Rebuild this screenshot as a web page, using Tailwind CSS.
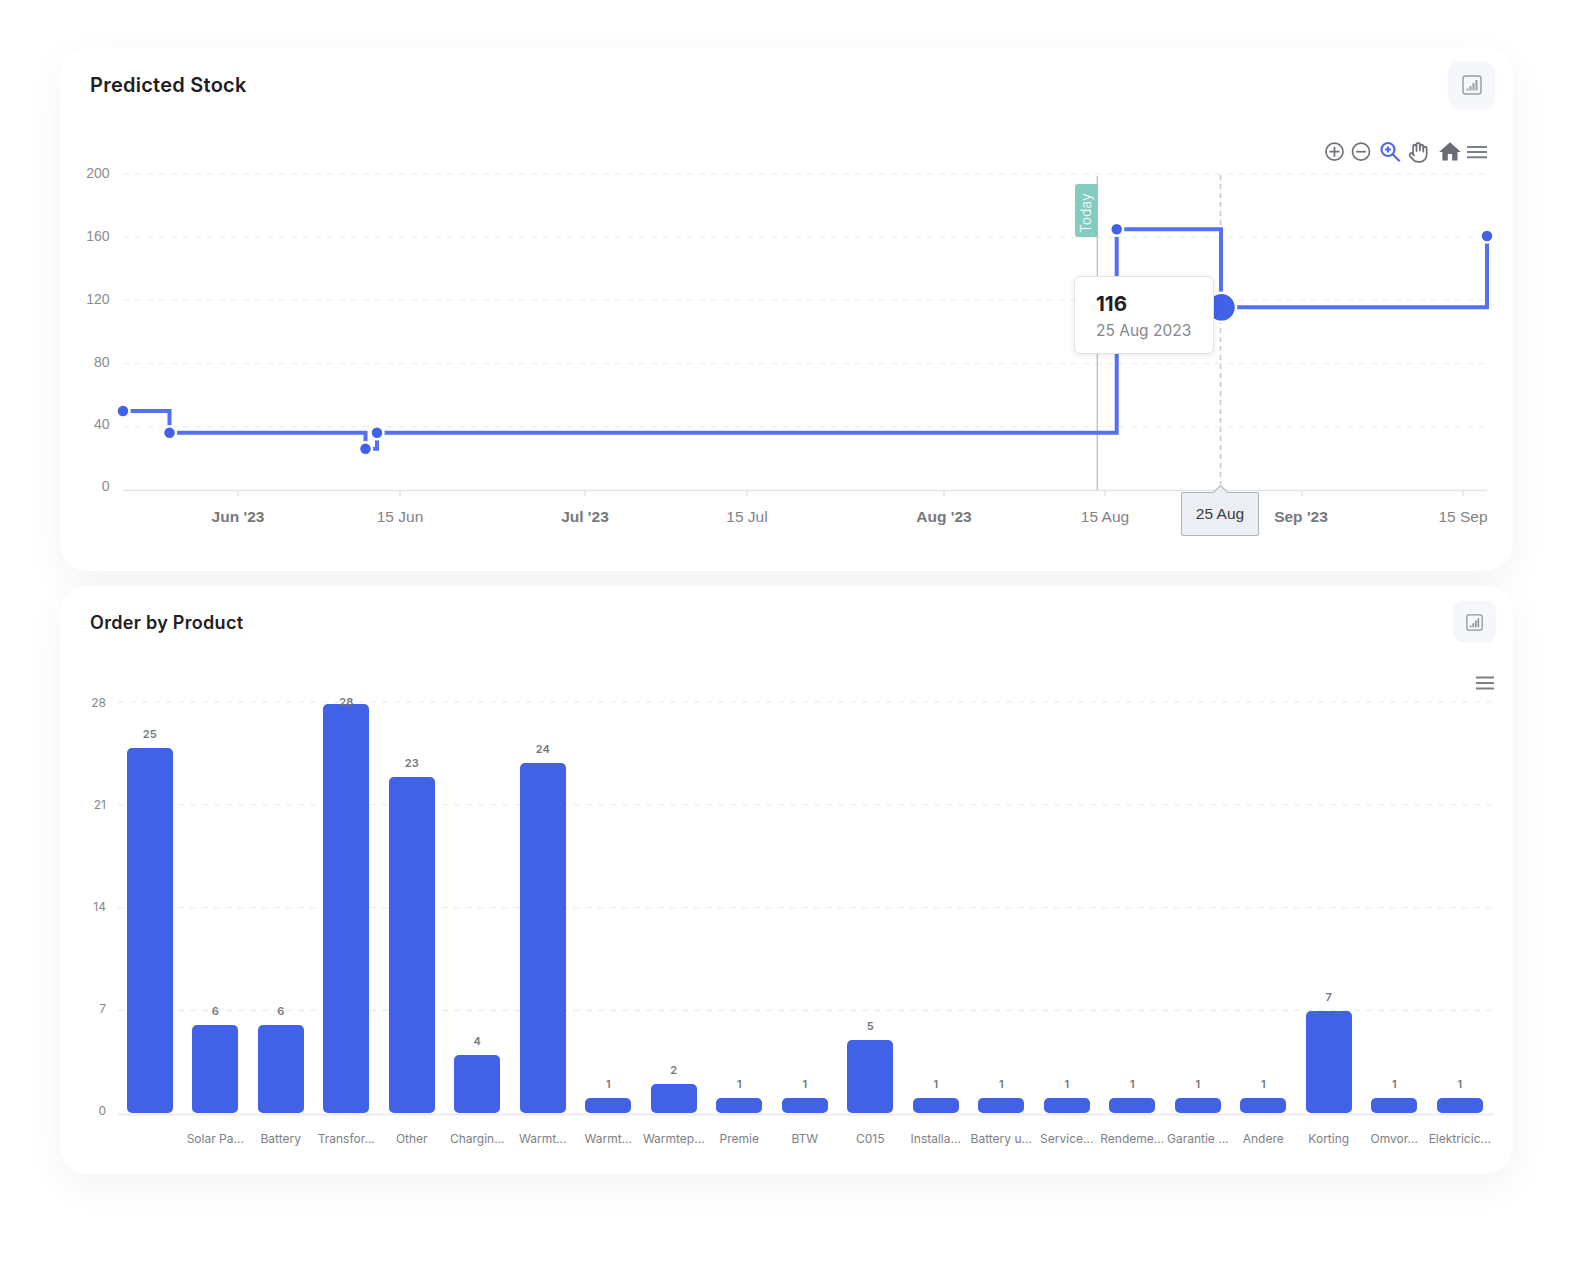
<!doctype html>
<html lang="en">
  <head>
    <meta charset="UTF-8" />
    <title>Stock dashboard</title>
    <script src="https://cdn.jsdelivr.net/npm/@tailwindcss/browser@4"></script>
  </head>
  <body class="bg-white font-['Inter',sans-serif] text-[#1f2023]">
    <div class="w-[1574px] h-[1265px] pt-[48px] pl-[60px] flex flex-col gap-[15px]">

      <!-- predicted stock -->
      <section class="w-[1453px] h-[523px] rounded-[28px] bg-white shadow-[0_12px_40px_rgba(0,0,0,0.05)]">
        <div class="flex items-center justify-between pl-[30px] pr-[18px] pt-[13px]">
          <h2 class="text-[20px] font-semibold tracking-[0.25px]">Predicted Stock</h2>
          <button class="w-[47px] h-[48px] rounded-[12px] bg-[#f6f7fa] flex items-center justify-center">
            <svg viewBox="0 0 20 20" class="w-[20px] h-[20px] fill-none stroke-[#9a9fa6] stroke-[1.5]">
              <rect x="1" y="1" width="18" height="18" rx="2.5" />
              <path d="M5.500 15.500v-2M8.500 15.500v-4.500M11.500 15.500V8M14.500 15.500V5" stroke-width="2" />
            </svg>
          </button>
        </div>
        <div class="relative w-[1453px] h-[462px]">
          <svg viewBox="60 109 1453 462" class="block w-[1453px] h-[462px] font-['Liberation_Sans',sans-serif]">
            <g class="stroke-[#eeeff3]" stroke-width="1.300" stroke-dasharray="6 6">
              <path d="M123 174.200H1487M123 237.300H1487M123 300.400H1487M123 363.500H1487M123 426.600H1487" />
            </g>
            <g class="fill-[#8a8c92] text-[14px]" text-anchor="end">
              <text x="109.500" y="178">200</text>
              <text x="109.500" y="241">160</text>
              <text x="109.500" y="304">120</text>
              <text x="109.500" y="367">80</text>
              <text x="109.500" y="429">40</text>
              <text x="109.500" y="491">0</text>
            </g>
            <path d="M123 490.600H1487M238 490.600v6M400 490.600v6M585 490.600v6M747 490.600v6M944 490.600v6M1105 490.600v6M1302 490.600v6M1463 490.600v6" class="stroke-[#e0e5ea]" stroke-width="1.500" fill="none" />
            <g class="text-[15.500px]" text-anchor="middle">
              <g class="fill-[#75787d] font-bold">
                <text x="238" y="522">Jun '23</text>
                <text x="585" y="522">Jul '23</text>
                <text x="944" y="522">Aug '23</text>
                <text x="1301" y="522">Sep '23</text>
              </g>
              <g class="fill-[#7f8288]">
                <text x="400" y="522">15 Jun</text>
                <text x="747" y="522">15 Jul</text>
                <text x="1105" y="522">15 Aug</text>
                <text x="1463" y="522">15 Sep</text>
              </g>
            </g>

            <!-- today annotation -->
            <path d="M1097.300 176V490" class="stroke-[#a3c9c5]" stroke-width="1.300" />
            <path d="M1097.300 184H1078a3 3 0 0 0-3 3v47a3 3 0 0 0 3 3h19.300z" class="fill-[#84ccc0]" />
            <text transform="translate(1091 236) rotate(-90)" x="3" class="fill-white text-[14px] font-light font-['Inter',sans-serif]">Today</text>

            <!-- crosshair -->
            <path d="M1220.500 175V484" class="stroke-[#c6c9ce]" stroke-width="1.600" stroke-dasharray="5 4" />

            <path d="M123 411H169.500V432.700H365.500V448.700H377V432.700H1116.700V229.300H1221V307.300H1487V236" fill="none" class="stroke-[#5571ef]" stroke-width="4" />
            <g class="fill-[#4162e6] stroke-white" stroke-width="2.500">
              <circle cx="123" cy="411" r="6.500" />
              <circle cx="169.500" cy="432.700" r="6.500" />
              <circle cx="365.500" cy="448.700" r="6.500" />
              <circle cx="377" cy="432.700" r="6.500" />
              <circle cx="1116.700" cy="229.300" r="6.500" />
              <circle cx="1487" cy="236" r="6.500" />
              <circle cx="1221.500" cy="307.300" r="14.500" />
            </g>

            <!-- toolbar -->
            <g fill="none" class="stroke-[#6e7278]" stroke-width="1.700">
              <circle cx="1334.500" cy="151.700" r="8.500" />
              <path d="M1334.500 146.700v10M1329.500 151.700h10" />
              <circle cx="1361" cy="151.700" r="8.500" />
              <path d="M1356 151.700h10" />
            </g>
            <g fill="none" class="stroke-[#4b6bea]" stroke-width="2.200">
              <circle cx="1388" cy="149.500" r="6.500" />
              <path d="M1392.700 154.200l7 7M1385 149.500h6M1388 146.500v6" />
            </g>
            <g transform="translate(1408 141) scale(0.85 0.95)" fill="none" class="stroke-[#6e7278]" stroke-width="2" stroke-linecap="round" stroke-linejoin="round">
              <path d="M18 11V6a2 2 0 0 0-2-2a2 2 0 0 0-2 2" />
              <path d="M14 10V4a2 2 0 0 0-2-2a2 2 0 0 0-2 2v2" />
              <path d="M10 10.500V6a2 2 0 0 0-2-2a2 2 0 0 0-2 2v8" />
              <path d="M18 8a2 2 0 1 1 4 0v6a8 8 0 0 1-8 8h-2c-2.800 0-4.500-.86-5.990-2.340l-3.600-3.600a2 2 0 0 1 2.830-2.820L7 15" />
            </g>
            <path transform="translate(1437 139) scale(1.080)" d="M10 20v-6h4v6h5v-8h3L12 3 2 12h3v8z" class="fill-[#666d74]" />
            <path d="M1467 147h20M1467 152h20M1467 157.300h20" class="stroke-[#7c8087]" stroke-width="2" />
          </svg>

          <!-- value tooltip -->
          <div class="absolute left-[1014px] top-[167px] w-[140px] h-[78px] rounded-[6px] border border-[#e3e4ea] bg-white shadow-[0_2px_6px_rgba(0,0,0,0.08)] pl-[21px] pt-[13px]">
            <div class="text-[20.500px] leading-[28px] font-bold text-[#1f2023]">116</div>
            <div class="text-[15.500px] leading-[26px] text-[#85878d] whitespace-nowrap">25 Aug 2023</div>
          </div>

          <!-- x axis tooltip -->
          <div class="absolute left-[1121px] top-[383px] w-[78px] h-[44px] rounded-[2px] border border-[#aeb3b9] bg-[#eceef3] flex items-center justify-center font-['Liberation_Sans',sans-serif] text-[15.500px] text-[#373d3f]">
            <span class="absolute left-[33px] top-[-6px] w-[11px] h-[11px] rotate-45 bg-[#eceef3] border-l border-t border-[#aeb3b9]"></span>
            <span class="relative">25 Aug</span>
          </div>
        </div>
      </section>

      <!-- order by product -->
      <section class="w-[1453px] h-[588px] rounded-[28px] bg-white shadow-[0_12px_40px_rgba(0,0,0,0.05)]">
        <div class="flex items-center justify-between pl-[30px] pr-[17px] pt-[15px]">
          <h2 class="text-[18px] font-semibold tracking-[0.3px]">Order by Product</h2>
          <button class="w-[43px] h-[42px] rounded-[10px] bg-[#f6f7fa] flex items-center justify-center">
            <svg viewBox="0 0 20 20" class="w-[17px] h-[17px] fill-none stroke-[#8f949b] stroke-[1.500]">
              <rect x="1" y="1" width="18" height="18" rx="2.500" />
              <path d="M5.500 15.500v-2M8.500 15.500v-4.500M11.500 15.500V8M14.500 15.500V5" stroke-width="2" />
            </svg>
          </button>
        </div>
        <div class="relative h-[531px]">
          <svg viewBox="60 643.500 1453 531" class="absolute left-0 top-0 w-[1453px] h-[531px]">
            <path d="M118 702.300H1491M118 805.200H1491M118 908.200H1491M118 1011H1491" class="stroke-[#eceef5]" stroke-width="1.300" stroke-dasharray="6 6" />
            <path d="M118 1115H1494" class="stroke-[#ecebf5]" stroke-width="2" />
            <g class="fill-[#85878d] text-[12px]" text-anchor="end">
              <text x="106" y="707">28</text>
              <text x="106" y="809">21</text>
              <text x="106" y="911">14</text>
              <text x="106" y="1013">7</text>
              <text x="106" y="1115">0</text>
            </g>
            <path d="M1476 678h18M1476 683.500h18M1476 689h18" class="stroke-[#7c8087]" stroke-width="2" />
          </svg>

          <div class="relative pl-[57px]">
            <div class="flex items-end h-[470px] text-[11px] leading-[14px] font-semibold text-[#73767c] text-center">
              <div class="w-[65.500px] flex flex-col items-center"><span class="mb-[7px]">25</span><div class="w-[46px] h-[365px] rounded-[5px] bg-[#4162e6]"></div></div>
              <div class="w-[65.500px] flex flex-col items-center"><span class="mb-[7px]">6</span><div class="w-[46px] h-[88px] rounded-[5px] bg-[#4162e6]"></div></div>
              <div class="w-[65.500px] flex flex-col items-center"><span class="mb-[7px]">6</span><div class="w-[46px] h-[88px] rounded-[5px] bg-[#4162e6]"></div></div>
              <div class="w-[65.500px] flex flex-col items-center"><span class="relative z-10 mb-[-5px]">28</span><div class="w-[46px] h-[409px] rounded-[5px] bg-[#4162e6]"></div></div>
              <div class="w-[65.500px] flex flex-col items-center"><span class="mb-[7px]">23</span><div class="w-[46px] h-[336px] rounded-[5px] bg-[#4162e6]"></div></div>
              <div class="w-[65.500px] flex flex-col items-center"><span class="mb-[7px]">4</span><div class="w-[46px] h-[58px] rounded-[5px] bg-[#4162e6]"></div></div>
              <div class="w-[65.500px] flex flex-col items-center"><span class="mb-[7px]">24</span><div class="w-[46px] h-[350px] rounded-[5px] bg-[#4162e6]"></div></div>
              <div class="w-[65.500px] flex flex-col items-center"><span class="mb-[7px]">1</span><div class="w-[46px] h-[15px] rounded-[5px] bg-[#4162e6]"></div></div>
              <div class="w-[65.500px] flex flex-col items-center"><span class="mb-[7px]">2</span><div class="w-[46px] h-[29px] rounded-[5px] bg-[#4162e6]"></div></div>
              <div class="w-[65.500px] flex flex-col items-center"><span class="mb-[7px]">1</span><div class="w-[46px] h-[15px] rounded-[5px] bg-[#4162e6]"></div></div>
              <div class="w-[65.500px] flex flex-col items-center"><span class="mb-[7px]">1</span><div class="w-[46px] h-[15px] rounded-[5px] bg-[#4162e6]"></div></div>
              <div class="w-[65.500px] flex flex-col items-center"><span class="mb-[7px]">5</span><div class="w-[46px] h-[73px] rounded-[5px] bg-[#4162e6]"></div></div>
              <div class="w-[65.500px] flex flex-col items-center"><span class="mb-[7px]">1</span><div class="w-[46px] h-[15px] rounded-[5px] bg-[#4162e6]"></div></div>
              <div class="w-[65.500px] flex flex-col items-center"><span class="mb-[7px]">1</span><div class="w-[46px] h-[15px] rounded-[5px] bg-[#4162e6]"></div></div>
              <div class="w-[65.500px] flex flex-col items-center"><span class="mb-[7px]">1</span><div class="w-[46px] h-[15px] rounded-[5px] bg-[#4162e6]"></div></div>
              <div class="w-[65.500px] flex flex-col items-center"><span class="mb-[7px]">1</span><div class="w-[46px] h-[15px] rounded-[5px] bg-[#4162e6]"></div></div>
              <div class="w-[65.500px] flex flex-col items-center"><span class="mb-[7px]">1</span><div class="w-[46px] h-[15px] rounded-[5px] bg-[#4162e6]"></div></div>
              <div class="w-[65.500px] flex flex-col items-center"><span class="mb-[7px]">1</span><div class="w-[46px] h-[15px] rounded-[5px] bg-[#4162e6]"></div></div>
              <div class="w-[65.500px] flex flex-col items-center"><span class="mb-[7px]">7</span><div class="w-[46px] h-[102px] rounded-[5px] bg-[#4162e6]"></div></div>
              <div class="w-[65.500px] flex flex-col items-center"><span class="mb-[7px]">1</span><div class="w-[46px] h-[15px] rounded-[5px] bg-[#4162e6]"></div></div>
              <div class="w-[65.500px] flex flex-col items-center"><span class="mb-[7px]">1</span><div class="w-[46px] h-[15px] rounded-[5px] bg-[#4162e6]"></div></div>
            </div>
            <div class="flex mt-[17px] text-[12px] leading-[18px] text-[#7d7f85] whitespace-nowrap">
              <div class="w-[65.500px] flex justify-center"></div>
              <div class="w-[65.500px] flex justify-center">Solar Pa...</div>
              <div class="w-[65.500px] flex justify-center">Battery</div>
              <div class="w-[65.500px] flex justify-center">Transfor...</div>
              <div class="w-[65.500px] flex justify-center">Other</div>
              <div class="w-[65.500px] flex justify-center">Chargin...</div>
              <div class="w-[65.500px] flex justify-center">Warmt...</div>
              <div class="w-[65.500px] flex justify-center">Warmt...</div>
              <div class="w-[65.500px] flex justify-center">Warmtep...</div>
              <div class="w-[65.500px] flex justify-center">Premie</div>
              <div class="w-[65.500px] flex justify-center">BTW</div>
              <div class="w-[65.500px] flex justify-center">C015</div>
              <div class="w-[65.500px] flex justify-center">Installa...</div>
              <div class="w-[65.500px] flex justify-center">Battery u...</div>
              <div class="w-[65.500px] flex justify-center">Service...</div>
              <div class="w-[65.500px] flex justify-center">Rendeme...</div>
              <div class="w-[65.500px] flex justify-center">Garantie ...</div>
              <div class="w-[65.500px] flex justify-center">Andere</div>
              <div class="w-[65.500px] flex justify-center">Korting</div>
              <div class="w-[65.500px] flex justify-center">Omvor...</div>
              <div class="w-[65.500px] flex justify-center">Elektricic...</div>
            </div>
          </div>
        </div>
      </section>
    </div>
  </body>
</html>
